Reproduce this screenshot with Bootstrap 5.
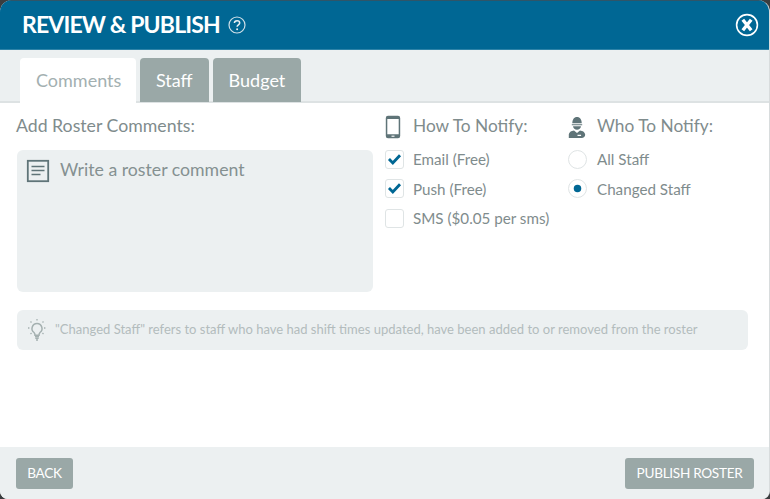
<!DOCTYPE html>
<html lang="en">
<head>
<meta charset="utf-8">
<title>Review &amp; Publish</title>
<link href="https://cdn.jsdelivr.net/npm/bootstrap@5.3.0/dist/css/bootstrap.min.css" rel="stylesheet">
<style>
html,body{height:100%;margin:0;background:#3a3d3f;overflow:hidden}
body{font-family:Lato,"Liberation Sans",sans-serif;color:#7f8c8d}
.rp-window{width:770px;height:499px;background:#fff;border-radius:12px 12px 8px 8px;overflow:hidden;display:flex;flex-direction:column;border-right:1px solid #d8dcdd}
.rp-head{height:50px;flex:none;background:#006794;color:#fff;padding:0 10px 1px 22px;border-top:1px solid #2f5568;border-bottom:1px solid #2d83a8}
.rp-title{font-size:23px;font-weight:700;letter-spacing:-.85px;margin:0;line-height:47px;color:#fff}
.rp-tabs{height:53px;flex:none;background:#ecf0f1;border-bottom:2px solid #dde2e3;padding:8px 0 0 20px;gap:4px;flex-wrap:nowrap}
.rp-tabs .nav-link{height:44px;border:0;border-radius:4px 4px 0 0;background:#9aa8a7;color:#fff;font-size:18px;line-height:44px;padding:0 16px;margin:0}
.rp-tabs .nav-link.active{background:#fff;color:#a3b0b1;padding:0 16px;width:116px;height:45px}
.rp-main{flex:1 1 auto;padding:11px 22px 0 16px}
.rp-cols{display:flex}
.rp-left{width:357px;margin-right:12px}
.rp-how{width:183px}
.rp-label{font-size:17.3px;line-height:24px;color:#7f8c8d;margin:0}
.rp-left .rp-label{font-size:17.7px}
.rp-labelrow{height:24px;margin-bottom:11px}
.rp-labelrow svg{margin-top:2px}
.rp-comment{height:142px;background:#ecf0f1;border-radius:6px;padding:8px 9px;gap:10px;margin:12px 0 0 1px}
.rp-cicon{margin-top:1px;flex:none}
.rp-placeholder{font-size:17.7px;line-height:24px;color:#859191}
.rp-check{display:flex;align-items:center;min-height:0;height:20px;margin:0 0 9.5px;padding:0;gap:9px;font-size:15.2px;color:#7f8c8d}
.rp-check .form-check-input{width:19px;height:19px;margin:0;float:none;flex:none;border:1px solid #dfe4e5;box-shadow:none;background-color:#fff}
.rp-check .form-check-input[type=checkbox]{border-radius:3px}
.rp-check .form-check-input[type=checkbox]:checked{background-image:url("data:image/svg+xml,%3csvg xmlns='http://www.w3.org/2000/svg' viewBox='0 0 20 20'%3e%3cpath fill='none' stroke='%23006794' stroke-width='3.4' d='M3.500 9.500l4.500 4.500 8.500-9'/%3e%3c/svg%3e");background-size:100%}
.rp-check .form-check-input[type=radio]:checked{background-image:url("data:image/svg+xml,%3csvg xmlns='http://www.w3.org/2000/svg' viewBox='0 0 20 20'%3e%3ccircle cx='10' cy='10' r='4.400' fill='%23006794'/%3e%3c/svg%3e");background-size:100%}
.rp-check .form-check-label{line-height:20px}
.rp-how .rp-labelrow{gap:12px}
.rp-who .rp-labelrow{gap:11px}
.rp-who .rp-check{gap:10px}
.rp-tip{height:40px;background:#ecf0f1;border-radius:6px;margin:18px 0 0 1px;padding:0 10px;gap:8px;font-size:13.03px;color:#b3bcbd;width:731px}
.rp-foot{height:52px;flex:none;background:#ecf0f1;padding:11px 15px 10px 16px}
.rp-btn{height:31px;background:#9aa8a7;border:0;border-radius:3px;color:#fff;font-size:13.6px;line-height:31px;padding:0 11px;text-transform:uppercase;letter-spacing:-.3px}
.rp-btn:hover{background:#9aa8a7;color:#fff}
.rp-btn-back{width:57px;padding:0;text-align:center}
.rp-btn-pub{width:129px;padding:0;text-align:center}
</style>
</head>
<body>
<div class="rp-window">
  <header class="rp-head d-flex align-items-center justify-content-between">
    <div class="d-flex align-items-center gap-2">
      <h1 class="rp-title">REVIEW &amp; PUBLISH</h1>
      <svg width="18" height="18" viewBox="0 0 18 18" aria-hidden="true"><circle cx="9" cy="9" r="8" fill="none" stroke="#cfe0e8" stroke-width="1.200"/><path d="M6.400 7.100c0-1.600 1.200-2.400 2.700-2.400s2.600.9 2.600 2.200c0 1.900-2.600 1.900-2.600 3.800" fill="none" stroke="#e8f0f4" stroke-width="1.500"/><circle cx="9.100" cy="13.200" r="1" fill="#e8f0f4"/></svg>
    </div>
    <svg width="24" height="24" viewBox="0 0 24 24" aria-hidden="true"><circle cx="12" cy="12" r="10.400" fill="none" stroke="#fff" stroke-width="1.600"/><path d="M7.800 6.800l8.400 10.400M16.200 6.800l-8.400 10.400" stroke="#fff" stroke-width="3.400"/></svg>
  </header>
  <ul class="nav nav-tabs rp-tabs">
    <li class="nav-item"><a class="nav-link active text-center" href="#">Comments</a></li>
    <li class="nav-item"><a class="nav-link" href="#">Staff</a></li>
    <li class="nav-item"><a class="nav-link" href="#">Budget</a></li>
  </ul>
  <main class="rp-main">
    <div class="rp-cols">
      <section class="rp-left">
        <p class="rp-label">Add Roster Comments:</p>
        <div class="rp-comment d-flex align-items-start">
          <svg class="rp-cicon" width="24" height="24" viewBox="0 0 24 24" aria-hidden="true"><rect x="1.800" y="1.800" width="20.400" height="20.400" fill="none" stroke="#5f7478" stroke-width="1.800"/><path d="M5.500 7.500h13M5.500 11.500h13M5.500 15.500h9" stroke="#5f7478" stroke-width="1.600"/></svg>
          <span class="rp-placeholder">Write a roster comment</span>
        </div>
      </section>
      <section class="rp-how">
        <div class="rp-labelrow d-flex align-items-center">
          <svg width="16" height="24" viewBox="0 0 16 24" aria-hidden="true"><path d="M3 .8h10A2.200 2.200 0 0 1 15.200 3v18a2.200 2.200 0 0 1-2.200 2.200H3A2.200 2.200 0 0 1 .8 21V3A2.200 2.200 0 0 1 3 .8zM2.300 4v15.200h11.400V4z" fill="#5f7478" fill-rule="evenodd"/><path d="M6.500 21.200h3" stroke="#fff" stroke-width="1.100"/></svg>
          <span class="rp-label">How To Notify:</span>
        </div>
        <div class="form-check rp-check"><input class="form-check-input" type="checkbox" id="n1" checked><label class="form-check-label" for="n1">Email (Free)</label></div>
        <div class="form-check rp-check"><input class="form-check-input" type="checkbox" id="n2" checked><label class="form-check-label" for="n2">Push (Free)</label></div>
        <div class="form-check rp-check"><input class="form-check-input" type="checkbox" id="n3"><label class="form-check-label" for="n3">SMS ($0.05 per sms)</label></div>
      </section>
      <section class="rp-who">
        <div class="rp-labelrow d-flex align-items-center">
          <svg width="18" height="24" viewBox="0 0 18 24" aria-hidden="true"><path d="M4.300 8.200C4.300 4.600 6 2 9 2s4.700 2.600 4.700 6.200z" fill="#5f7478"/><path d="M3.800 9.200h10.400v1H3.800z" fill="#5f7478"/><path d="M5 11.300h8c-.3 2.100-1.900 3.400-4 3.400s-3.700-1.300-4-3.400z" fill="#5f7478"/><path d="M.8 23v-3.200c0-2.600 2.500-4.200 5.200-4.400l3 2.600 3-2.600c2.700.2 5.200 1.800 5.200 4.400 0 2-1.500 3.200-3.600 3.200z" fill="#5f7478"/><path d="M9.500 20.300h3.600" stroke="#fff" stroke-width="1.200"/></svg>
          <span class="rp-label">Who To Notify:</span>
        </div>
        <div class="form-check rp-check"><input class="form-check-input" type="radio" name="who" id="w1"><label class="form-check-label" for="w1">All Staff</label></div>
        <div class="form-check rp-check"><input class="form-check-input" type="radio" name="who" id="w2" checked><label class="form-check-label" for="w2">Changed Staff</label></div>
      </section>
    </div>
    <div class="rp-tip d-flex align-items-center">
      <svg width="20" height="24" viewBox="0 0 20 24" aria-hidden="true"><path d="M10 5.500a5 5 0 0 0-3 9c.9.800 1 1.600 1 2.800h4c0-1.200.1-2 1-2.800a5 5 0 0 0-3-9z" fill="none" stroke="#a4b0b0" stroke-width="1.500"/><path d="M8 18.500h4M8.300 20.300h3.400M9 22h2" stroke="#a4b0b0" stroke-width="1.500"/><path d="M10 1v2M3.500 3.500l1.300 1.300M16.500 3.500l-1.300 1.300M1 10h2M17 10h2M3.500 16l1.300-1.200M16.500 16l-1.300-1.200" stroke="#a4b0b0" stroke-width="1.300" stroke-dasharray="1.400 .8"/></svg>
      <span>"Changed Staff" refers to staff who have had shift times updated, have been added to or removed from the roster</span>
    </div>
  </main>
  <footer class="rp-foot d-flex justify-content-between align-items-start">
    <button class="btn rp-btn rp-btn-back" type="button">Back</button>
    <button class="btn rp-btn rp-btn-pub" type="button">Publish Roster</button>
  </footer>
</div>
<script src="https://cdn.jsdelivr.net/npm/bootstrap@5.3.0/dist/js/bootstrap.bundle.min.js"></script>
</body>
</html>
